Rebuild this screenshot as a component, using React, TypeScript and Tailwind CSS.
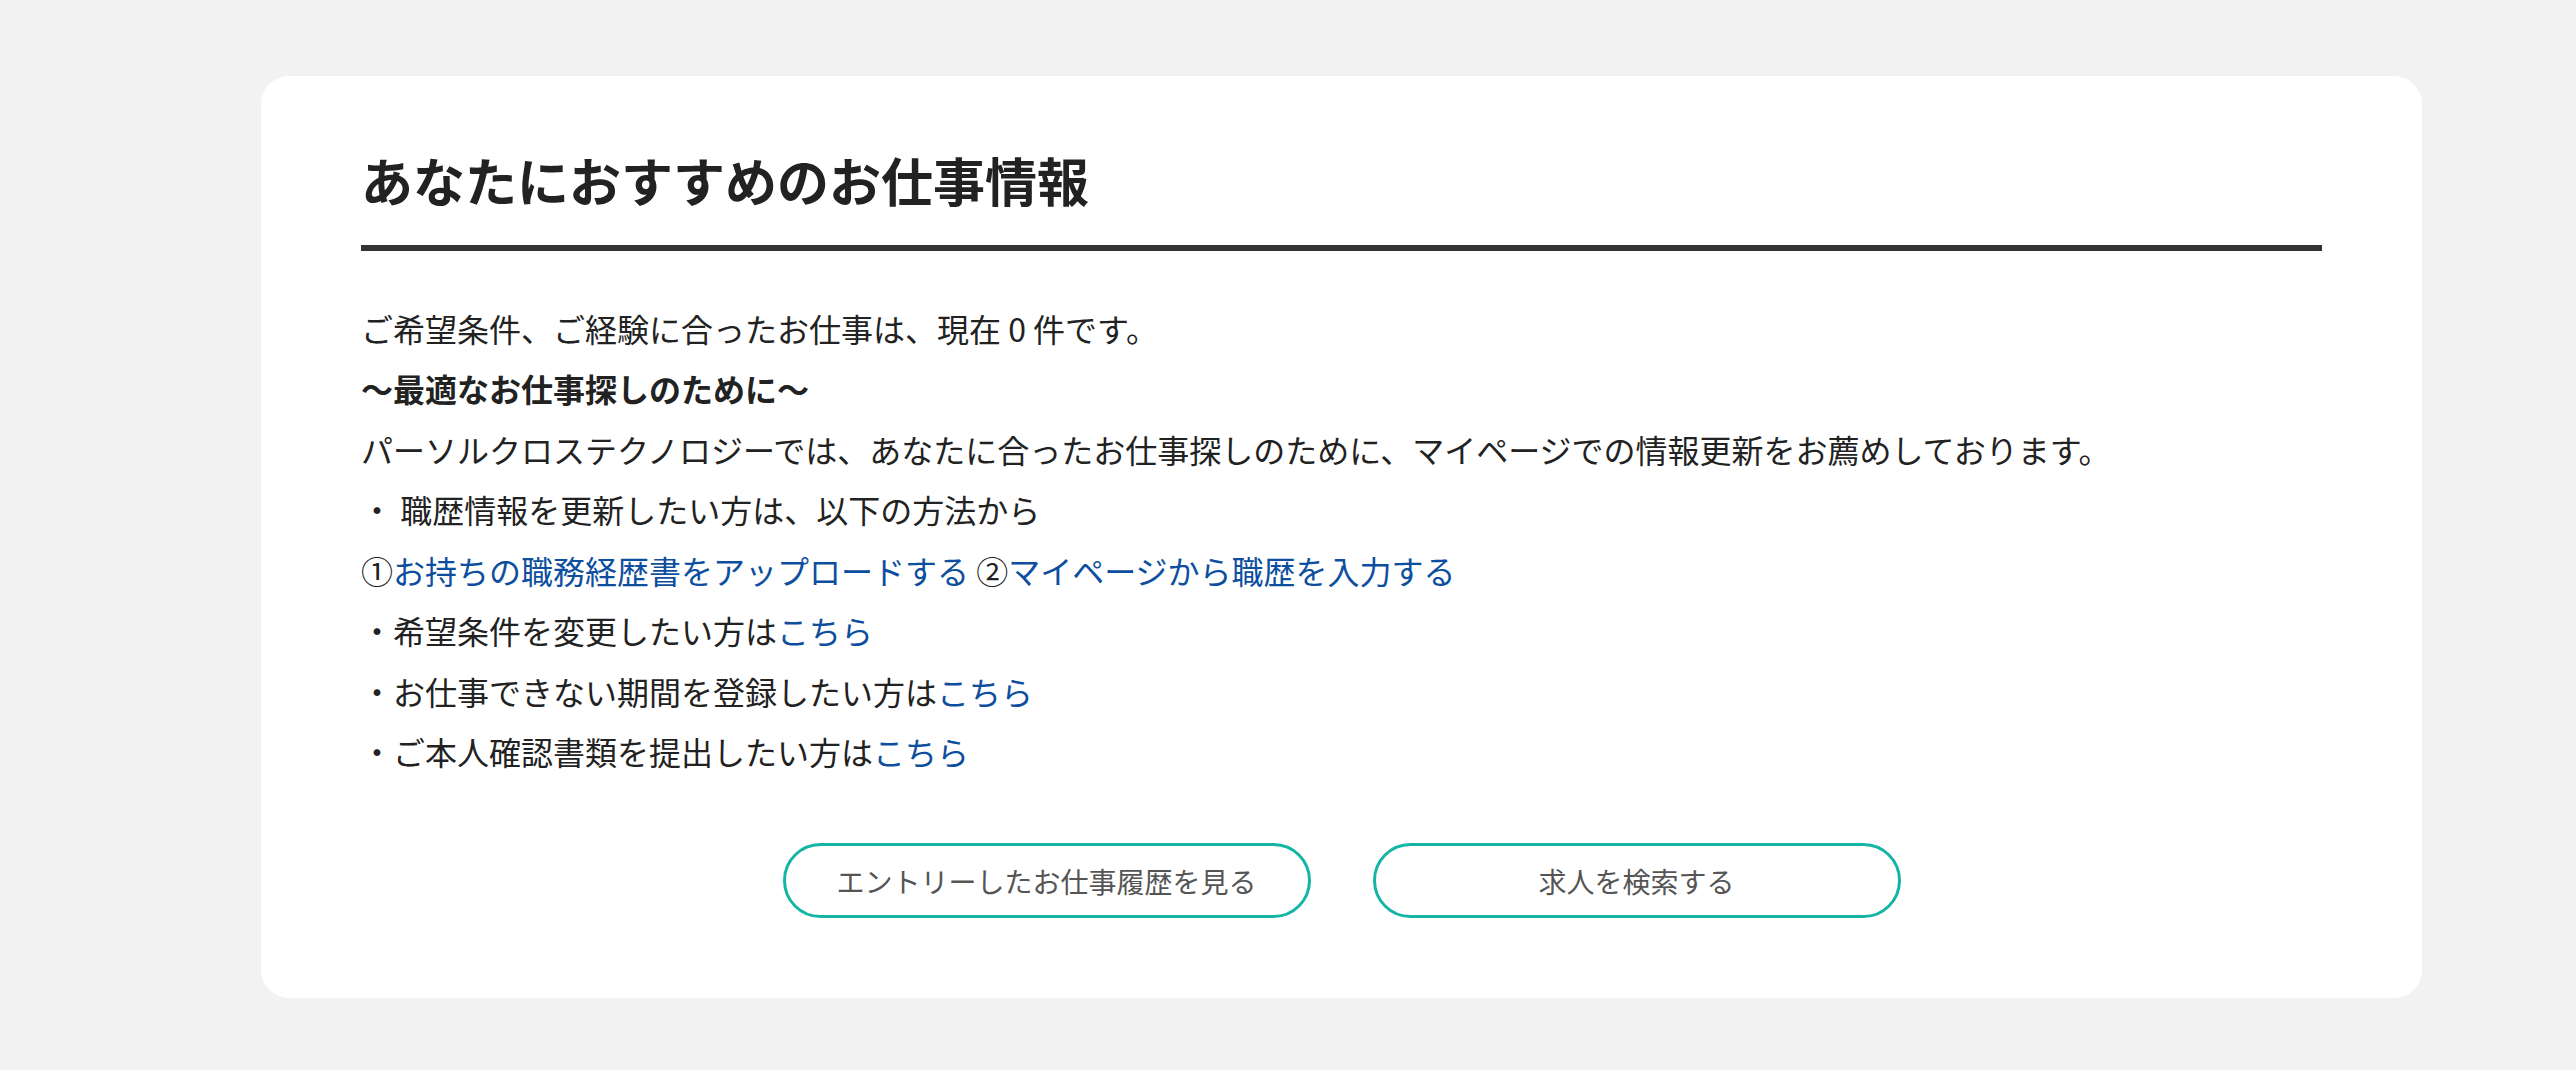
import React from "react";

const Link = ({ children }: { children: React.ReactNode }) => (
  <a href="#" className="text-[#0d4f9e] no-underline">
    {children}
  </a>
);

export default function App() {
  return (
    <div className="min-h-[1070px] w-full bg-[#f2f2f2] pt-[76px] pl-[261px] font-['Noto_Sans_CJK_JP','Noto_Sans',sans-serif] text-[#222]">
      <div className="w-[2161px] rounded-[28px] bg-white px-[100px] pt-[65px] pb-[80px]">
        <h2 className="border-b-[6px] border-[#333] pb-[25px] text-[52px] font-bold leading-[78.75px] text-[#222]">
          あなたにおすすめのお仕事情報
        </h2>
        <div className="mt-[47px] text-[32px] leading-[60.5px]">
          <p>ご希望条件、ご経験に合ったお仕事は、現在 0 件です。</p>
          <p className="font-bold">〜最適なお仕事探しのために〜</p>
          <p>
            パーソルクロステクノロジーでは、あなたに合ったお仕事探しのために、マイページでの情報更新をお薦めしております。
          </p>
          <p>・ 職歴情報を更新したい方は、以下の方法から</p>
          <p>
            ①<Link>お持ちの職務経歴書をアップロードする</Link> ②
            <Link>マイページから職歴を入力する</Link>
          </p>
          <p>
            ・希望条件を変更したい方は<Link>こちら</Link>
          </p>
          <p>
            ・お仕事できない期間を登録したい方は<Link>こちら</Link>
          </p>
          <p>
            ・ご本人確認書類を提出したい方は<Link>こちら</Link>
          </p>
        </div>
        <div className="mt-[61.5px] flex justify-center gap-[62px]">
          <button className="flex h-[75px] w-[528px] items-center justify-center rounded-full border-[3.5px] border-[#14b5a5] bg-white text-[28px] text-[#555]">
            エントリーしたお仕事履歴を見る
          </button>
          <button className="flex h-[75px] w-[528px] items-center justify-center rounded-full border-[3.5px] border-[#14b5a5] bg-white text-[28px] text-[#555]">
            求人を検索する
          </button>
        </div>
      </div>
    </div>
  );
}
